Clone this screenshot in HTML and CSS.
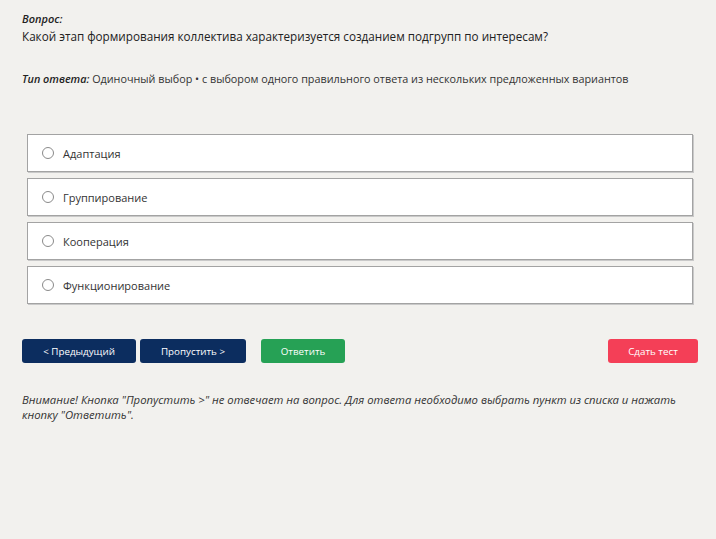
FILE: index.html
```html
<!DOCTYPE html>
<html lang="ru">
<head>
    <meta charset="UTF-8">
    <title>Тест</title>
    <link rel="stylesheet" href="styles.css">
</head>
<body>
    <!-- Вопрос -->
    <div class="question">
        <div class="question-label">Вопрос:</div>
        <div class="question-text">Какой этап формирования коллектива характеризуется созданием подгрупп по интересам?</div>
    </div>

    <!-- Тип ответа -->
    <div class="answer-type">
        <span class="answer-type-label">Тип ответа:</span> Одиночный выбор • с выбором одного правильного ответа из нескольких предложенных вариантов
    </div>

    <!-- Варианты ответа -->
    <div class="options">
        <label class="option"><span class="radio"></span>Адаптация</label>
        <label class="option"><span class="radio"></span>Группирование</label>
        <label class="option"><span class="radio"></span>Кооперация</label>
        <label class="option"><span class="radio"></span>Функционирование</label>
    </div>

    <!-- Кнопки -->
    <div class="actions">
        <button class="btn btn-nav btn-prev">&lt; Предыдущий</button>
        <button class="btn btn-nav btn-skip">Пропустить &gt;</button>
        <button class="btn btn-answer">Ответить</button>
        <button class="btn btn-finish">Сдать тест</button>
    </div>

    <!-- Предупреждение -->
    <p class="notice">Внимание! Кнопка "Пропустить &gt;" не отвечает на вопрос. Для ответа необходимо выбрать пункт из списка и нажать кнопку "Ответить".</p>
</body>
</html>
```

FILE: styles.css
```css
* {
    margin: 0;
    padding: 0;
    box-sizing: border-box;
}

body {
    background: #f2f1ee;
    font-family: "Open Sans", "Noto Sans", sans-serif;
    color: #222;
    padding: 11px 18px 0 22px;
}

/* Вопрос */
.question-label {
    font-size: 11px;
    font-style: italic;
    font-weight: 600;
    line-height: 16px;
}

.question-text {
    font-size: 11.7px;
    line-height: 18px;
}

.answer-type {
    margin-top: 26px;
    font-size: 10.8px;
    line-height: 16px;
    color: #333;
}

.answer-type-label {
    font-style: italic;
    font-weight: 600;
    color: #222;
}

/* Варианты */
.options {
    margin: 47px 5px 0 5px;
    display: flex;
    flex-direction: column;
    gap: 6px;
}

.option {
    display: flex;
    align-items: center;
    height: 38px;
    background: #fff;
    border: 1px solid #a3a3a3;
    box-shadow: 1px 1px 0 #c9c9c9;
    padding-left: 14px;
    font-size: 11px;
    color: #333;
}

.radio {
    width: 12px;
    height: 12px;
    border: 1px solid #8a8a8a;
    border-radius: 50%;
    margin-right: 9px;
    background: #fff;
}

/* Кнопки */
.actions {
    margin-top: 35px;
    display: flex;
    gap: 4px;
}

.btn {
    height: 24px;
    border: none;
    border-radius: 3px;
    color: #fff;
    font-family: "Open Sans", "Noto Sans", sans-serif;
    font-size: 9.8px;
}

.btn-nav {
    background: #0c2d5f;
}

.btn-prev {
    width: 114px;
}

.btn-skip {
    width: 106px;
}

.btn-answer {
    width: 84px;
    margin-left: 11px;
    background: #26a155;
}

.btn-finish {
    width: 90px;
    margin-left: auto;
    background: #f43f57;
}

/* Предупреждение */
.notice {
    margin-top: 29px;
    font-size: 11.3px;
    font-style: italic;
    line-height: 15px;
    color: #333;
    padding-right: 20px;
}
```
